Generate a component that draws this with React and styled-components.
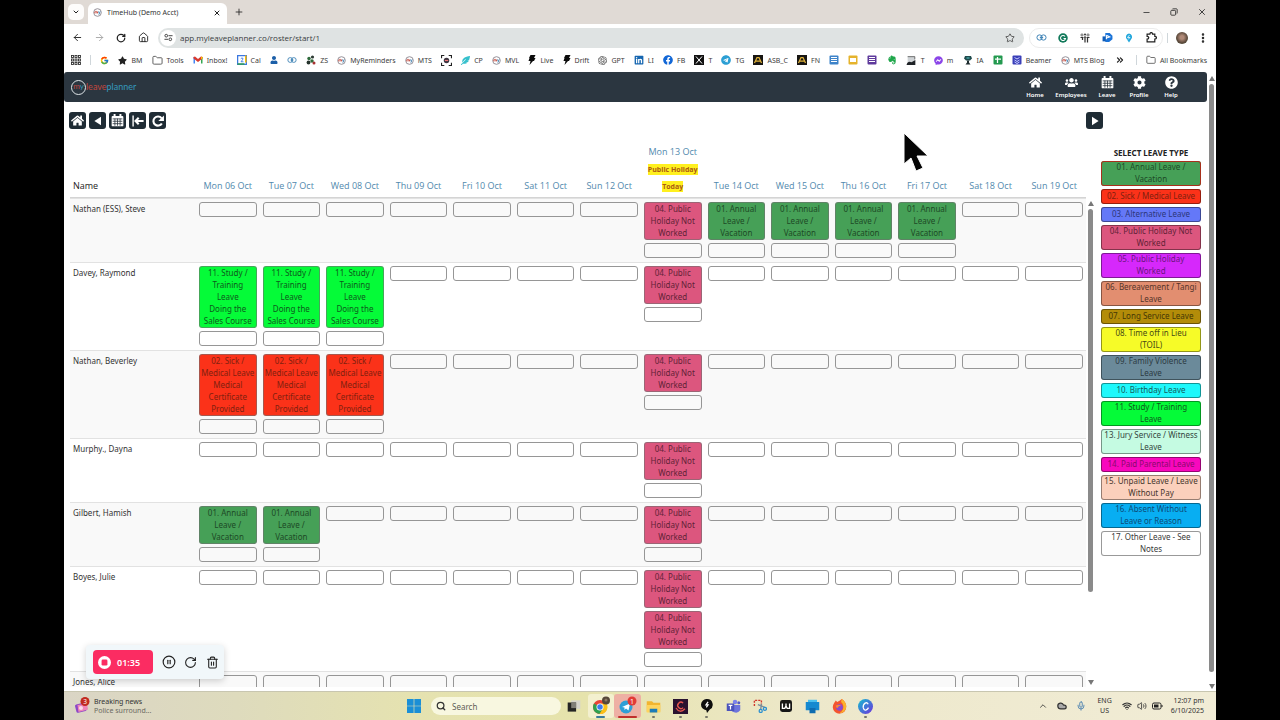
import React from "react";
import styled, { createGlobalStyle, css } from "styled-components";
import {
  FaHome, FaUsers, FaCog, FaQuestionCircle,
  FaFacebook, FaLinkedin, FaTelegram, FaStar, FaEvernote, FaUser,
  FaFacebookMessenger, FaFeatherAlt,
} from "react-icons/fa";
import { FcGoogle } from "react-icons/fc";
import { SiOpenai } from "react-icons/si";
import {
  ChevronDown, ChevronUp, X, Plus, ArrowLeft, ArrowRight, RotateCw, House, Star, Minus,
  Folder, EllipsisVertical, ChevronsRight, Cloud, Mic, Wifi, Volume2, Trash2,
  CirclePause, Search,
} from "lucide-react";

const GlobalStyle = createGlobalStyle`
  * { box-sizing: border-box; }
  body { margin: 0; background: #000; font-family: "Noto Sans", "Open Sans", sans-serif; }
  button, input { font-family: inherit; }
  button { padding: 0; border: 0; background: none; color: inherit; }
  svg { display: block; flex: none; }
`;

const Screen = styled.div`
  display: flex;
  flex-direction: column;
  height: 100vh;
  margin: 0 5%;
  background: #fff;
  overflow: hidden;
`;

/* ---------- browser chrome ---------- */

const TabStrip = styled.header`
  display: flex;
  align-items: stretch;
  height: 24px;
  flex: none;
  padding-left: 4px;
  background: #e0dad5;
  color: #222;
`;
const TabSearch = styled.button`
  width: 16px;
  height: 16px;
  margin: 4px 4px 0 0;
  display: grid;
  place-items: center;
  border-radius: 5px;
  background: #fdfcfb;
`;
const Tab = styled.div`
  display: flex;
  align-items: center;
  gap: 5px;
  width: 139px;
  margin-top: 3px;
  padding: 0 6px 2px 5px;
  border-radius: 6px 6px 0 0;
  background: #fff;
  font-size: 7px;
  color: #333;
`;
const TabTitle = styled.span`
  flex: 1;
  white-space: nowrap;
`;
const IconButton = styled.button`
  display: grid;
  place-items: center;
  width: ${(p) => p.$w || 22}px;
  color: ${(p) => p.$color || "#222"};
`;
const WindowButtons = styled.div`
  display: flex;
  margin-left: auto;
`;
const AddressRow = styled.div`
  display: flex;
  align-items: center;
  height: 27px;
  flex: none;
  padding: 0 4px 0 2px;
`;
const UrlBar = styled.label`
  display: flex;
  align-items: center;
  flex: 1;
  height: 20px;
  margin: 0 5px 0 4px;
  padding: 0 9px 0 2px;
  gap: 4px;
  border-radius: 10px;
  background: #dfe3e3;
`;
const SiteInfo = styled.span`
  display: grid;
  place-items: center;
  width: 16px;
  height: 16px;
  border-radius: 8px;
  background: #fff;
`;
const UrlInput = styled.input`
  flex: 1;
  min-width: 0;
  padding: 0;
  border: 0;
  outline: 0;
  background: transparent;
  font-family: "Open Sans", sans-serif;
  font-size: 8px;
  color: #3a3d40;
`;
const Extensions = styled.div`
  display: flex;
  align-items: center;
  height: 20px;
  border: 1px solid #ececec;
  border-radius: 10px;
`;
const Divider = styled.span`
  width: 1px;
  height: 10px;
  flex: none;
  background: #cfd6da;
  margin: 0 ${(p) => p.$m || 0}px;
`;
const Avatar = styled.span`
  width: 12px;
  height: 12px;
  margin: 0 6px 0 4px;
  border-radius: 6px;
  background: radial-gradient(circle at 50% 45%, #b08a78 20%, #5c4a3c 60%, #3c4a34);
`;
const Bookmarks = styled.nav`
  display: flex;
  align-items: center;
  height: 21px;
  flex: none;
  padding: 0 9px 3px 7px;
  font-size: 7px;
  color: #3c3c3c;
`;
const BookmarkList = styled.div`
  display: flex;
  flex: 1;
  align-items: center;
  justify-content: space-between;
`;
const Bookmark = styled.a`
  display: flex;
  align-items: center;
  gap: 4px;
  color: inherit;
  text-decoration: none;
  white-space: nowrap;
`;
const AllBookmarks = styled(Bookmark)`
  margin-left: 9px;
`;

/* ---------- web app ---------- */

const Page = styled.div`
  display: flex;
  flex: 1;
  min-height: 0;
`;
const AppColumn = styled.main`
  display: flex;
  flex-direction: column;
  flex: 1;
  min-width: 0;
`;
const NavBar = styled.nav`
  display: flex;
  align-items: center;
  justify-content: space-between;
  height: 30px;
  flex: none;
  padding: 0 20px 0 7px;
  border-radius: 3px;
  background: #2b3640;
`;
const Logo = styled.a`
  display: flex;
  align-items: center;
  font: 9px/14px Lato, sans-serif;
  text-decoration: none;
  color: #c0473f;
`;
const LogoRing = styled.span`
  display: flex;
  justify-content: center;
  flex: none;
  width: 15px;
  height: 15px;
  border: 1px solid #dfe5e8;
  border-radius: 8px;
  font-size: 8px;
  line-height: 11px;
`;
const Blue = styled.span`
  color: #3599bd;
`;
const NavItems = styled.div`
  display: flex;
`;
const NavItem = styled.a`
  display: flex;
  flex-direction: column;
  align-items: center;
  gap: 2px;
  width: ${(p) => p.$w || 32}px;
  color: #fff;
  font-size: 6px;
  font-weight: 600;
  line-height: 8px;
  text-decoration: none;
`;
const ActionRow = styled.div`
  display: flex;
  justify-content: space-between;
  flex: none;
  padding: 10px 104px 12px 5px;
`;
const ActionGroup = styled.div`
  display: flex;
  gap: 3px;
`;
const ActionButton = styled.button`
  display: grid;
  place-items: center;
  width: 17px;
  height: 17px;
  border-radius: 3px;
  background: #1f2c35;
  color: #fff;
`;
const Workspace = styled.div`
  display: flex;
  flex: 1;
  min-height: 0;
  padding: 0 6px 4px;
`;
const RosterPane = styled.section`
  flex: 1;
  min-width: 0;
  overflow: hidden;
`;
const Roster = styled.table`
  width: 100%;
  table-layout: fixed;
  border-collapse: separate;
  border-spacing: 0;
  font-size: 8px;
  color: #333;
`;
const HeadCell = styled.th`
  width: ${(p) => (p.$name ? "126px" : "auto")};
  padding: 2px 0 3px ${(p) => (p.$name ? 3 : 0)}px;
  border-bottom: 1px solid #d4d4d4;
  text-align: ${(p) => (p.$name ? "left" : "center")};
  vertical-align: bottom;
  color: ${(p) => (p.$name ? "#222" : "#5189ad")};
  font-family: "Open Sans", sans-serif;
  font-weight: 500;
  font-size: 9px;
  line-height: 17px;
  white-space: nowrap;
`;
const Flag = styled.mark`
  padding: 1px 0;
  background: #fff01f;
  color: #ab5a12;
  font-size: 7px;
  font-weight: 700;
  line-height: 10px;
`;
const Row = styled.tr`
  background: ${(p) => (p.$odd ? "#f9f9f9" : "#fff")};
`;
const cell = css`
  border-top: 1px solid #e2e2e2;
  vertical-align: top;
`;
const NameCell = styled.th`
  ${cell}
  padding: 3px;
  font-size: 8px;
  font-weight: 400;
  line-height: 13px;
  text-align: left;
`;
const DayCell = styled.td`
  ${cell}
  padding: 3px 3px 4px;
`;
const Stack = styled.div`
  display: flex;
  flex-direction: column;
  gap: 3px;
`;
const slot = css`
  width: 100%;
  border: 1px solid #969696;
  border-radius: 3px;
`;
const EmptySlot = styled.button`
  ${slot}
  height: 15px;
`;
const LeaveSlot = styled.button`
  ${slot}
  border-color: #70707099;
  background: ${(p) => p.$bg};
  color: ${(p) => p.$ink};
  font-size: 8px;
  line-height: 12px;
  white-space: pre-line;
`;
const ScrollTrack = styled.div`
  display: flex;
  flex-direction: column;
  align-items: center;
  flex: none;
  width: 9px;
  padding: ${(p) => p.$top}px 0 ${(p) => p.$bottom}px;
  gap: 3px;
`;
const Thumb = styled.div`
  width: 5px;
  flex: ${(p) => p.$size} 0 0;
  border-radius: 3px;
  background: #8a8a8a;
`;
const ThumbRest = styled.div`
  flex: ${(p) => p.$size} 0 0;
`;
const SideBar = styled.aside`
  display: flex;
  flex-direction: column;
  gap: 3px;
  width: 100px;
  flex: none;
  margin-left: 6px;
`;
const SideTitle = styled.h2`
  margin: 6px 0 0;
  font-size: 8px;
  font-weight: 700;
  line-height: 11px;
  text-align: center;
  color: #222;
`;
const LeaveType = styled.button`
  min-height: 15px;
  padding-bottom: 1px;
  border-radius: 3px;
  box-shadow: inset 0 0 0 1px ${(p) => (p.$selected ? "#a8301c" : "#00000066")};
  background: ${(p) => p.$bg};
  color: ${(p) => p.$ink};
  font-size: 8px;
  line-height: 12px;
  white-space: pre-line;
`;

/* ---------- overlays ---------- */

const Recorder = styled.div`
  position: absolute;
  left: calc(5% + 22px);
  bottom: 41px;
  display: flex;
  align-items: center;
  gap: 9px;
  height: 34px;
  padding: 0 5px 0 7px;
  border-radius: 4px;
  background: #f1f7fa;
  box-shadow: 0 2px 7px #0000002e;
  color: #222;
`;
const StopButton = styled.button`
  display: flex;
  align-items: center;
  gap: 6px;
  width: 60px;
  height: 24px;
  padding-left: 5px;
  border-radius: 4px;
  background: #fb2c62;
  color: #fff;
  font-size: 9px;
  font-weight: 600;
`;
const Pointer = styled.svg`
  position: absolute;
  left: 903px;
  top: 132px;
`;

/* ---------- taskbar ---------- */

const TaskBar = styled.footer`
  display: grid;
  grid-template-columns: 1fr auto 1fr;
  align-items: center;
  flex: none;
  height: 29px;
  border-top: 1px solid #c8c6b0;
  background: linear-gradient(90deg, #dad5c5, #dedbbd 15%, #e5e2b0 30%, #e6e3ac 45%, #ede8cb 65%, #f1ecd6);
  color: #333;
`;
const News = styled.button`
  display: flex;
  align-items: center;
  gap: 4px;
  padding-left: 10px;
  font-size: 7px;
  line-height: 9px;
  text-align: left;
`;
const Muted = styled.span`
  color: #6b6a62;
`;
const TaskCenter = styled.div`
  display: flex;
  align-items: center;
`;
const SearchBox = styled.label`
  display: flex;
  align-items: center;
  gap: 6px;
  width: 130px;
  height: 18px;
  margin-left: 4px;
  padding: 0 5px;
  border-radius: 9px;
  background: #f8f7e0;
`;
const SearchInput = styled.input`
  width: 100%;
  padding: 0;
  border: 0;
  outline: 0;
  background: transparent;
  font-size: 8px;
  &::placeholder { color: #5f5e56; opacity: 1; }
`;
const TaskApps = styled.div`
  display: flex;
  width: 318px;
`;
const TaskApp = styled.button`
  position: relative;
  display: grid;
  place-items: center;
  flex: 1;
  height: 24px;
  border-radius: 3px;
  background: ${(p) => p.$bg || "transparent"};
  &::after {
    content: "";
    position: absolute;
    bottom: 0;
    width: ${(p) => (p.$wide ? p.$wide : 3)}px;
    height: 2px;
    border-radius: 1px;
    background: ${(p) => p.$mark || "transparent"};
  }
`;
const Tray = styled.div`
  display: flex;
  align-items: center;
  justify-content: flex-end;
  gap: 5px;
  padding-right: 12px;
  font-size: 7px;
  line-height: 10px;
`;
const TrayIcons = styled.div`
  display: flex;
  align-items: center;
  gap: 9px;
`;
const Language = styled.span`
  margin: 0 5px 0 6px;
  text-align: center;
`;
const Clock = styled.span`
  margin-left: 3px;
  text-align: right;
`;

/* ---------- drawings ---------- */

const Svg = ({ s = 10, box = 20, children, ...rest }) => (
  <svg width={s} height={s} viewBox={`0 0 ${box} ${box}`} fill="none" aria-hidden="true" {...rest}>{children}</svg>
);
const MyMark = ({ s = 9 }) => (
  <Svg s={s}>
    <circle cx="10" cy="10" r="8.500" fill="#fff" stroke="#8b8790" strokeWidth="2" />
    <path d="M4 12V8.500q1.500-2 3 0V12m0-3.500q1.500-2 3 0V12" stroke="#c0392b" strokeWidth="1.800" />
    <path d="m12 7.500 2 4.500m2-4.500-3 7.500" stroke="#3577a8" strokeWidth="1.800" />
  </Svg>
);
const AppsGrid = () => (
  <Svg s={10}>
    {[1, 8, 15].map((y) => [1, 8, 15].map((x) => (
      <rect key={`${x}-${y}`} x={x} y={y} width="4" height="4" stroke="#333" strokeWidth="1.800" />
    )))}
  </Svg>
);
const Gmail = () => (
  <Svg>
    <path d="M1 17V4h3v13z" fill="#4285f4" /><path d="M16 17V4h3v13z" fill="#34a853" />
    <path d="m1 4 3-1 6 5 6-5 3 1v3l-9 7-9-7z" fill="#d93a2f" />
    <path d="m16 3 3 1v3l-3 2z" fill="#fbbc04" />
  </Svg>
);
const GCal = () => (
  <Svg>
    <path d="M1 1h18v18H1z" fill="#fff" stroke="#3b78e0" strokeWidth="3" />
    <path d="M17.500 1v14" stroke="#fbbc04" strokeWidth="3" /><path d="M1 18h14" stroke="#2f9e52" strokeWidth="3" />
    <path d="M7.500 7.500q2.500-3 4.500-.5 0 2-4 6.500h5" stroke="#3b78e0" strokeWidth="1.800" />
  </Svg>
);
const Rings = ({ s = 10 }) => (
  <Svg s={s}>
    <circle cx="6.500" cy="10" r="4.800" stroke="#3f83b5" strokeWidth="1.800" />
    <circle cx="13.500" cy="10" r="4.800" stroke="#3f83b5" strokeWidth="1.800" />
    <path d="M7 10h6" stroke="#3f83b5" strokeWidth="1.800" />
  </Svg>
);
const Paws = () => (
  <Svg>
    <circle cx="6" cy="7" r="3.500" fill="#2f6b3c" /><circle cx="13" cy="4" r="3.200" fill="#2d3b34" />
    <circle cx="5" cy="15" r="3.800" fill="#26342d" /><circle cx="12" cy="12" r="3.500" fill="#2f6b3c" />
    <circle cx="16" cy="16" r="3" fill="#a83232" />
  </Svg>
);
const FrameFace = () => (
  <Svg s={11}>
    <path d="M1 6V1h5M14 1h5v5M19 14v5h-5M6 19H1v-5" stroke="#222" strokeWidth="2" />
    <circle cx="10" cy="10" r="5" fill="#3d3440" /><path d="M7 10h6" stroke="#e77" strokeWidth="2" />
  </Svg>
);
const Bolt = () => (
  <svg width="8" height="10" viewBox="0 0 16 20" aria-hidden="true"><path d="M5 0h10l-3 6h3l-3 6h-2l-7 8 2-8H1l2-6H2z" fill="#0b0b0b" /></svg>
);
const TradeMark = () => (
  <Svg><path d="M0 0h20v20H0z" fill="#171512" /><path d="m3 16 5-11h4l5 11M5 12h10" stroke="#e0b23a" strokeWidth="2.500" /></Svg>
);
const Sheet = ({ color, kind }) => (
  <Svg>
    <rect x="1" y="1" width="18" height="18" rx="2" fill={color} />
    {kind === "box" && <rect x="4" y="6" width="12" height="8" fill="#fff" />}
    {kind === "plus" && <path d="M4 8h12M9 4v12" stroke="#fff" strokeWidth="2.500" />}
    {kind === "lines" && <path d="M4 5h12M4 9h12M4 13h12" stroke="#fff" strokeWidth="2" />}
    {kind === "wave" && <path d="m5 5 5 3 5-3M5 10l5 3 5-3M5 14l5 3 5-3" stroke="#c7cdff" strokeWidth="2" />}
  </Svg>
);
const Gauge = () => (
  <Svg s={11}><path d="M3 3h13v12H3z" fill="#cfd3d6" /><path d="M1 18q2-8 9-5l7-4v9z" fill="#1e2226" /><path d="M3 3h13v5" stroke="#555" strokeWidth="1.500" /></Svg>
);
const Robot = () => (
  <Svg><path d="M4 2h12l2 5-4 4H6L2 7z" fill="#1f4a4c" /><path d="M7 6h6" stroke="#5cc" strokeWidth="2" /><path d="M8 11h4v4l3 4H5l3-4z" fill="#1d2b2e" /></Svg>
);
const Sliders = () => (
  <Svg s={9}>
    <circle cx="5" cy="6" r="3" stroke="#333" strokeWidth="2" /><path d="M10 6h9M1 14h8" stroke="#333" strokeWidth="2" />
    <circle cx="14" cy="14" r="3" stroke="#333" strokeWidth="2" />
  </Svg>
);
const Restore = () => (
  <Svg s={8}><rect x="2" y="6" width="12" height="12" rx="2" stroke="#222" strokeWidth="2" /><path d="M6 3q0-1 2-1h8q2 0 2 2v8q0 2-1 2" stroke="#222" strokeWidth="2" /></Svg>
);
const Grammar = () => (
  <Svg s={10}><circle cx="10" cy="10" r="9.500" fill="#11795a" /><path d="M14 7a5 5 0 1 0 1 4h-4" stroke="#fff" strokeWidth="2.200" /></Svg>
);
const People = () => (
  <Svg s={10}>
    <circle cx="4" cy="4" r="2.200" stroke="#444" strokeWidth="1.500" /><circle cx="10" cy="3" r="2" fill="#333" /><circle cx="16" cy="4" r="2.200" stroke="#444" strokeWidth="1.500" />
    <path d="M1 9h6M8 8h4M13 9h6" stroke="#333" strokeWidth="2" /><path d="M5 10v4M10 8v11M15 10v9" stroke="#333" strokeWidth="2.500" />
  </Svg>
);
const BlueFlag = () => (
  <Svg s={11}><path d="M6 2h8l5 5v6l-6 5H6z" fill="#1a73d8" /><path d="M1 8h6v9H1z" fill="#0f5cb8" /><path d="M8 6v7M8 6l6 3-6 2" stroke="#fff" strokeWidth="2" /></Svg>
);
const Bulb = () => (
  <Svg s={10}><path d="M10 1a7 7 0 0 1 4 12l-4 6-4-6a7 7 0 0 1 4-12z" fill="#22a7dc" /><path d="m11 4-4 5h5l-4 4" stroke="#fff" strokeWidth="1.500" /></Svg>
);
const Puzzle = () => (
  <Svg s={11}><path d="M2 4h5q0-3 2.500-3T12 4h4v4q3 0 3 2.500T16 13v5H2v-5q3 0 3-2.500T2 8z" stroke="#222" strokeWidth="2.200" /></Svg>
);
const MonthGrid = ({ s = 13 }) => (
  <Svg s={s}>
    <rect x="1" y="3" width="18" height="16" rx="1.500" fill="#fff" />
    <path d="M5.500 0v5M14.500 0v5" stroke="#fff" strokeWidth="3" />
    <path d="M2.500 7.500h15M2.500 11.200h15M2.500 14.900h15M6 7v11M10 7v11M14 7v11" stroke="#25313a" strokeWidth="1.200" />
  </Svg>
);
const BackToStart = () => (
  <Svg s={14}><path d="M3 2v16" stroke="#fff" strokeWidth="2" /><path d="M7 10h11M11 5.500 6.500 10l4.500 4.500" stroke="#fff" strokeWidth="3" /></Svg>
);
const Reload = () => (
  <Svg s={14}><path d="M15.500 13.500A6.500 6.500 0 1 1 15 6" stroke="#fff" strokeWidth="3" /><path d="M18.500 2v8h-8z" fill="#fff" /></Svg>
);
const Triangle = ({ left }) => (
  <Svg s={12}><path d={left ? "M15 3v14L4 10z" : "M5 3v14l11-7z"} fill="#fff" /></Svg>
);
const Arrow = ({ up }) => (
  <svg width="6" height="5" viewBox="0 0 6 5" aria-hidden="true"><path d={up ? "M3 0l3 5H0z" : "M3 5l3-5H0z"} fill="#777" /></svg>
);
const StopMark = () => (
  <Svg s={13}><circle cx="10" cy="10" r="10" fill="#fff" /><rect x="5.500" y="5.500" width="9" height="9" rx="2" fill="#fb2c62" /></Svg>
);
const NewsArt = () => (
  <svg width="16" height="20" viewBox="0 0 32 40" aria-hidden="true">
    <rect x="3" y="15" width="21" height="17" rx="3" fill="#8c46c8" transform="rotate(-14 13 23)" />
    <path d="m7 18 19-3 2 12-19 5z" fill="#ee86b8" /><circle cx="14" cy="24" r="4" fill="#fff" opacity=".7" />
    <circle cx="22" cy="11" r="9" fill="#c22a20" />
    <text x="22" y="16" fontSize="13" textAnchor="middle" fill="#fff" fontFamily="Noto Sans">3</text>
  </svg>
);
const WindowsLogo = () => (
  <Svg s={14}><path d="M0 0h9.500v9.500H0zM10.500 0H20v9.500h-9.500zM0 10.500h9.500V20H0zM10.500 10.500H20V20h-9.500z" fill="#1b8fd6" /></Svg>
);
const TaskView = () => (
  <Svg s={14}><rect x="6" y="2" width="13" height="12" fill="#d6d4cc" /><rect x="1" y="5" width="12" height="13" fill="#242424" /><rect x="6" y="5" width="7" height="8" fill="#807e78" /></Svg>
);
const Chrome = () => (
  <svg width="20" height="20" viewBox="0 0 40 40" aria-hidden="true">
    <circle cx="18" cy="22" r="14" fill="#e84335" />
    <path d="M6 15a14 14 0 0 0 11 21l7-10-6-4z" fill="#2fa14f" /><path d="M18 15h13a14 14 0 0 1-14 21l7-11z" fill="#fbc117" />
    <circle cx="18" cy="22" r="7" fill="#fff" /><circle cx="18" cy="22" r="5.500" fill="#3b7ded" />
    <circle cx="30" cy="9" r="8" fill="#57483a" /><circle cx="30" cy="8" r="3" fill="#8c7865" />
  </svg>
);
const TelegramApp = () => (
  <svg width="20" height="20" viewBox="0 0 40 40" aria-hidden="true">
    <circle cx="18" cy="22" r="13" fill="#2f9fd6" /><path d="m10 22 16-7-3 14-5-4-3 3v-5z" fill="#fff" />
    <circle cx="30" cy="10" r="9" fill="#e23b36" />
    <text x="30" y="15" fontSize="14" textAnchor="middle" fill="#fff" fontFamily="Noto Sans">1</text>
  </svg>
);
const Explorer = () => (
  <Svg s={15}><path d="M1 3h7l2 2h9v12H1z" fill="#f2b530" /><path d="M1 8h18v10H1z" fill="#ffd45e" /><path d="M5 13h10v5H5z" fill="#1d7cb8" /></Svg>
);
const Camtasia = () => (
  <Svg s={15}><path d="M0 0h20v20H0z" fill="#2a1330" /><path d="M13.500 5.500a4.200 4.200 0 1 0 0 6M4 12q5 8 12 1" stroke="#e8574e" strokeWidth="1.800" /></Svg>
);
const Pin = () => (
  <Svg s={14}><path d="M10 0a8 8 0 0 1 4 15l-4 5-1-4A8 8 0 0 1 10 0z" fill="#0e0e0e" /><path d="m11.500 4-3 4.500h3L9 12" stroke="#fff" strokeWidth="1.800" /></Svg>
);
const Teams = () => (
  <Svg s={15}><circle cx="12" cy="4" r="3" fill="#7b83eb" /><circle cx="17" cy="5" r="2" fill="#5059c9" /><path d="M7 8h12v7q-3 4-7 3-5-1-5-4z" fill="#6d74dc" /><path d="M1 6h10v10H1z" fill="#4b53bc" /><path d="M3.500 8.500h5M6 8.500V14" stroke="#fff" strokeWidth="1.600" /></Svg>
);
const Snip = () => (
  <Svg s={14}><path d="M2 10V2h10v6" stroke="#d1362b" strokeWidth="2" strokeDasharray="3 1.500" /><path d="m7 8 10 4M12 7l-1 8" stroke="#7b8c99" strokeWidth="2" /><circle cx="17" cy="14" r="2.200" stroke="#2a8fd0" strokeWidth="1.800" /><circle cx="11" cy="17" r="2.200" stroke="#2a8fd0" strokeWidth="1.800" /></Svg>
);
const WApp = () => (
  <Svg s={12}><rect width="20" height="20" rx="4" fill="#161616" /><path d="M4 6v8h4l2-4 2 4h4V6M10 6v4" stroke="#fff" strokeWidth="2.200" /></Svg>
);
const Monitor = () => (
  <Svg s={15}><path d="M4 1h12v5H4z" fill="#4cc0ee" /><path d="M1 4h18v11H1z" fill="#1689d0" /><path d="M6 12h8v7H6z" fill="#0f6cb0" /></Svg>
);
const Firefox = () => (
  <Svg s={15}>
    <path d="M3 5q1-1 2-3l2 2q4-2 6-4 6 4 6 10a9 9 0 0 1-18 1q0-3 2-6z" fill="#f4552f" />
    <path d="M13 0q6 4 6 10a9 9 0 0 1-9 9q6-4 5-10-1-4-3-5z" fill="#fbb22c" />
    <circle cx="10" cy="11" r="4.500" fill="#8a4bd0" /><path d="M5 9q4-3 7 0-4 0-4 3-3 0-3-3z" fill="#f98a35" />
  </Svg>
);
const CanvaC = () => (
  <svg width="15" height="15" viewBox="0 0 20 20" fill="none" aria-hidden="true">
    <defs><linearGradient id="cg" x1="0" y1="0" x2="1" y2="1"><stop offset="0" stopColor="#12c0d0" /><stop offset="1" stopColor="#7130dd" /></linearGradient></defs>
    <circle cx="10" cy="10" r="10" fill="url(#cg)" /><path d="M13.500 7q-1-3-4-1.500-3 2-2.500 6 1 4 4 3 2-1 3-3" stroke="#fff" strokeWidth="1.700" />
  </svg>
);
const Battery = () => (
  <svg width="11" height="8" viewBox="0 0 22 16" fill="none" aria-hidden="true"><rect x="1" y="2" width="17" height="12" rx="3" stroke="#222" strokeWidth="2" /><rect x="4" y="5" width="9" height="6" fill="#222" /><path d="M20 6v4" stroke="#222" strokeWidth="2" /></svg>
);

/* ---------- data ---------- */

const bookmarks = [
  [<AppsGrid />],
  ["divider"],
  [<FcGoogle size={9} />],
  [<FaStar size={9} color="#222" />, "BM"],
  [<Folder size={11} color="#555" />, "Tools"],
  [<Gmail />, "Inbox!"],
  [<GCal />, "Cal"],
  [<FaUser size={8} color="#1c5fa8" />],
  [<Rings />],
  [<Paws />, "ZS"],
  [<MyMark />, "MyReminders"],
  [<MyMark />, "MTS"],
  [<FrameFace />],
  [<FaFeatherAlt size={9} color="#35c0cc" />, "CP"],
  [<MyMark />, "MVL"],
  [<Bolt />, "Live"],
  [<Bolt />, "Drift"],
  [<SiOpenai size={9} color="#444" />, "GPT"],
  [<FaLinkedin size={10} color="#1666b0" />, "LI"],
  [<FaFacebook size={10} color="#1267d6" />, "FB"],
  [<Svg><path d="M0 0h20v20H0z" fill="#111" /><path d="m4 3 12 14M16 3 4 17" stroke="#fff" strokeWidth="2" /></Svg>, "T"],
  [<FaTelegram size={10} color="#2c9fd4" />, "TG"],
  [<TradeMark />, "ASB_C"],
  [<TradeMark />, "FN"],
  [<Sheet color="#3d83c9" kind="lines" />],
  [<Sheet color="#e5b32c" kind="box" />],
  [<Sheet color="#5f3a9c" kind="lines" />],
  [<FaEvernote size={10} color="#1ea64a" />],
  [<Gauge />, "T"],
  [<FaFacebookMessenger size={9} color="#8b45e8" />, "m"],
  [<Robot />, "IA"],
  [<Sheet color="#23994f" kind="plus" />],
  [<Sheet color="#3a3fb8" kind="wave" />, "Beamer"],
  [<MyMark />, "MTS Blog"],
];

const types = {
  "01": { label: "01. Annual Leave /\nVacation", bg: "#46a057", ink: "#1d4a26" },
  "02": { label: "02. Sick / Medical Leave", bg: "#fb3219", ink: "#80200f" },
  "03": { label: "03. Alternative Leave", bg: "#6478f8", ink: "#2c3578" },
  "04": { label: "04. Public Holiday Not\nWorked", bg: "#dc567e", ink: "#612236" },
  "05": { label: "05. Public Holiday\nWorked", bg: "#d628fb", ink: "#6a1580" },
  "06": { label: "06. Bereavement / Tangi\nLeave", bg: "#e28e70", ink: "#56352a" },
  "07": { label: "07. Long Service Leave", bg: "#b38c09", ink: "#453806" },
  "08": { label: "08. Time off in Lieu\n(TOIL)", bg: "#f6fb28", ink: "#484a14" },
  "09": { label: "09. Family Violence\nLeave", bg: "#6b8a9a", ink: "#2b3a42" },
  10: { label: "10. Birthday Leave", bg: "#1ef8fb", ink: "#155c60" },
  11: { label: "11. Study / Training\nLeave", bg: "#05fb38", ink: "#0d5a1c" },
  13: { label: "13. Jury Service / Witness\nLeave", bg: "#c5fbe2", ink: "#34463e" },
  14: { label: "14. Paid Parental Leave", bg: "#f808bd", ink: "#8a0a6c" },
  15: { label: "15. Unpaid Leave / Leave\nWithout Pay", bg: "#fbd0bc", ink: "#46362e" },
  16: { label: "16. Absent Without\nLeave or Reason", bg: "#08aef2", ink: "#0c4c78" },
  17: { label: "17. Other Leave - See\nNotes", bg: "#fff", ink: "#3a3a3a" },
};
const order = ["01", "02", "03", "04", "05", "06", "07", "08", "09", "10", "11", "13", "14", "15", "16", "17"];

const slotText = {
  "01": "01. Annual\nLeave /\nVacation",
  "02": "02. Sick /\nMedical Leave\nMedical\nCertificate\nProvided",
  "04": "04. Public\nHoliday Not\nWorked",
  11: "11. Study /\nTraining\nLeave\nDoing the\nSales Course",
};

const days = ["Mon 06", "Tue 07", "Wed 08", "Thu 09", "Fri 10", "Sat 11", "Sun 12", "Mon 13", "Tue 14", "Wed 15", "Thu 16", "Fri 17", "Sat 18", "Sun 19"];

const staff = [
  ["Nathan (ESS), Steve", { 7: ["04"], 8: ["01"], 9: ["01"], 10: ["01"], 11: ["01"] }],
  ["Davey, Raymond", { 0: ["11"], 1: ["11"], 2: ["11"], 7: ["04"] }],
  ["Nathan, Beverley", { 0: ["02"], 1: ["02"], 2: ["02"], 7: ["04"] }],
  ["Murphy., Dayna", { 7: ["04"] }],
  ["Gilbert, Hamish", { 0: ["01"], 1: ["01"], 7: ["04"] }],
  ["Boyes, Julie", { 7: ["04", "04"] }],
  ["Jones, Alice", {}],
];

export default function App() {
  return (
    <>
      <GlobalStyle />
      <Screen>
        <TabStrip>
          <TabSearch aria-label="Search tabs"><ChevronDown size={8} strokeWidth={3} /></TabSearch>
          <Tab>
            <MyMark />
            <TabTitle>TimeHub (Demo Acct)</TabTitle>
            <IconButton $w={8} aria-label="Close tab"><X size={8} strokeWidth={3} /></IconButton>
          </Tab>
          <IconButton $w={24} aria-label="New tab"><Plus size={10} strokeWidth={2} /></IconButton>
          <WindowButtons>
            <IconButton $w={28} aria-label="Minimize"><Minus size={9} /></IconButton>
            <IconButton $w={28} aria-label="Restore"><Restore /></IconButton>
            <IconButton $w={28} aria-label="Close"><X size={10} /></IconButton>
          </WindowButtons>
        </TabStrip>

        <AddressRow>
          <IconButton aria-label="Back"><ArrowLeft size={11} /></IconButton>
          <IconButton aria-label="Forward" $color="#a5a5a5"><ArrowRight size={11} /></IconButton>
          <IconButton aria-label="Reload"><RotateCw size={10} strokeWidth={3} /></IconButton>
          <IconButton aria-label="Home page"><House size={11} /></IconButton>
          <UrlBar>
            <SiteInfo><Sliders /></SiteInfo>
            <UrlInput aria-label="Address" defaultValue="app.myleaveplanner.co/roster/start/1" />
            <Star size={10} color="#444" />
          </UrlBar>
          <Extensions>
            <IconButton aria-label="Links"><Rings s={11} /></IconButton>
            <IconButton aria-label="Grammar"><Grammar /></IconButton>
            <IconButton aria-label="People"><People /></IconButton>
            <IconButton aria-label="Flag"><BlueFlag /></IconButton>
            <IconButton aria-label="Tips"><Bulb /></IconButton>
            <IconButton aria-label="Extensions"><Puzzle /></IconButton>
          </Extensions>
          <Divider $m={4} />
          <Avatar />
          <IconButton $w={18} aria-label="Menu"><EllipsisVertical size={12} strokeWidth={3} /></IconButton>
        </AddressRow>

        <Bookmarks>
          <BookmarkList>
            {bookmarks.map(([icon, label], i) =>
              icon === "divider" ? <Divider key={i} /> : (
                <Bookmark key={i} href="#">{icon}{label && <span>{label}</span>}</Bookmark>
              )
            )}
          </BookmarkList>
          <IconButton $w={31} aria-label="More bookmarks"><ChevronsRight size={10} strokeWidth={3} /></IconButton>
          <Divider />
          <AllBookmarks href="#"><Folder size={10} color="#555" />All Bookmarks</AllBookmarks>
        </Bookmarks>

        <Page>
          <AppColumn>
            <NavBar>
              <Logo href="#">
                <LogoRing>m<Blue>y</Blue></LogoRing>leave<Blue>planner</Blue>
              </Logo>
              <NavItems>
                <NavItem href="#"><FaHome size={13} />Home</NavItem>
                <NavItem href="#" $w={40}><FaUsers size={13} />Employees</NavItem>
                <NavItem href="#"><MonthGrid />Leave</NavItem>
                <NavItem href="#"><FaCog size={13} />Profile</NavItem>
                <NavItem href="#"><FaQuestionCircle size={13} />Help</NavItem>
              </NavItems>
            </NavBar>

            <ActionRow>
              <ActionGroup>
                <ActionButton aria-label="Home"><FaHome size={13} /></ActionButton>
                <ActionButton aria-label="Previous"><Triangle left /></ActionButton>
                <ActionButton aria-label="Calendar"><MonthGrid /></ActionButton>
                <ActionButton aria-label="Back to start"><BackToStart /></ActionButton>
                <ActionButton aria-label="Refresh"><Reload /></ActionButton>
              </ActionGroup>
              <ActionButton aria-label="Next"><Triangle /></ActionButton>
            </ActionRow>

            <Workspace>
              <RosterPane>
                <Roster>
                  <thead>
                    <tr>
                      <HeadCell $name scope="col">Name</HeadCell>
                      {days.map((d, i) => (
                        <HeadCell key={d} scope="col">
                          {d} Oct
                          {i === 7 && <><br /><Flag>Public Holiday</Flag><br /><Flag>Today</Flag></>}
                        </HeadCell>
                      ))}
                    </tr>
                  </thead>
                  <tbody>
                    {staff.map(([name, leave], r) => (
                      <Row key={name} $odd={r % 2 === 0}>
                        <NameCell scope="row">{name}</NameCell>
                        {days.map((d, i) => (
                          <DayCell key={d}>
                            <Stack>
                              {(leave[i] || []).map((t, k) => (
                                <LeaveSlot key={k} $bg={types[t].bg} $ink={types[t].ink}>{slotText[t]}</LeaveSlot>
                              ))}
                              <EmptySlot aria-label={`Add leave for ${name}, ${d} Oct`} />
                            </Stack>
                          </DayCell>
                        ))}
                      </Row>
                    ))}
                  </tbody>
                </Roster>
              </RosterPane>
              <ScrollTrack $top={60} $bottom={2}>
                <Arrow up />
                <Thumb $size={385} />
                <ThumbRest $size={82} />
                <Arrow />
              </ScrollTrack>
              <SideBar>
                <SideTitle>SELECT LEAVE TYPE</SideTitle>
                {order.map((t) => (
                  <LeaveType key={t} $bg={types[t].bg} $ink={types[t].ink} $selected={t === "01"}>{types[t].label}</LeaveType>
                ))}
              </SideBar>
            </Workspace>
          </AppColumn>
          <ScrollTrack $top={4} $bottom={2}>
            <Arrow up />
            <Thumb $size={590} />
            <ThumbRest $size={6} />
            <Arrow />
          </ScrollTrack>
        </Page>

        <TaskBar>
          <News>
            <NewsArt />
            <span>Breaking news<br /><Muted>Police surround...</Muted></span>
          </News>
          <TaskCenter>
            <IconButton $w={26} aria-label="Start"><WindowsLogo /></IconButton>
            <SearchBox>
              <Search size={10} strokeWidth={3} />
              <SearchInput aria-label="Search" placeholder="Search" />
            </SearchBox>
            <TaskApps>
              <TaskApp aria-label="Task view"><TaskView /></TaskApp>
              <TaskApp aria-label="Chrome" $bg="#f3f0cf" $mark="#3a7a9c" $wide={9}><Chrome /></TaskApp>
              <TaskApp aria-label="Telegram" $bg="#eeb0a4" $mark="#c0302c" $wide={19}><TelegramApp /></TaskApp>
              <TaskApp aria-label="Files" $mark="#77766a"><Explorer /></TaskApp>
              <TaskApp aria-label="Camtasia" $mark="#77766a"><Camtasia /></TaskApp>
              <TaskApp aria-label="Notes" $mark="#77766a"><Pin /></TaskApp>
              <TaskApp aria-label="Teams"><Teams /></TaskApp>
              <TaskApp aria-label="Snipping tool"><Snip /></TaskApp>
              <TaskApp aria-label="Writer"><WApp /></TaskApp>
              <TaskApp aria-label="Remote desktop"><Monitor /></TaskApp>
              <TaskApp aria-label="Firefox"><Firefox /></TaskApp>
              <TaskApp aria-label="Canva" $mark="#77766a"><CanvaC /></TaskApp>
            </TaskApps>
          </TaskCenter>
          <Tray>
            <TrayIcons>
              <ChevronUp size={10} />
              <Cloud size={10} strokeWidth={3} fill="#aaa" />
              <Mic size={10} color="#3f78ad" />
            </TrayIcons>
            <Language>ENG<br />US</Language>
            <Wifi size={10} strokeWidth={3} />
            <Volume2 size={10} />
            <Battery />
            <Clock>12:07 pm<br />6/10/2025</Clock>
          </Tray>
        </TaskBar>
      </Screen>

      <Recorder>
        <StopButton><StopMark />01:35</StopButton>
        <IconButton $w={13} aria-label="Pause"><CirclePause size={14} /></IconButton>
        <IconButton $w={13} aria-label="Restart"><RotateCw size={13} /></IconButton>
        <IconButton $w={13} aria-label="Delete"><Trash2 size={13} /></IconButton>
      </Recorder>
      <Pointer width="26" height="40" viewBox="0 0 26 40" aria-hidden="true">
        <path d="M1 1v31l7-6 5 13 7-3-6-12h11z" fill="#050505" stroke="#fff" strokeWidth="1" />
      </Pointer>
    </>
  );
}
